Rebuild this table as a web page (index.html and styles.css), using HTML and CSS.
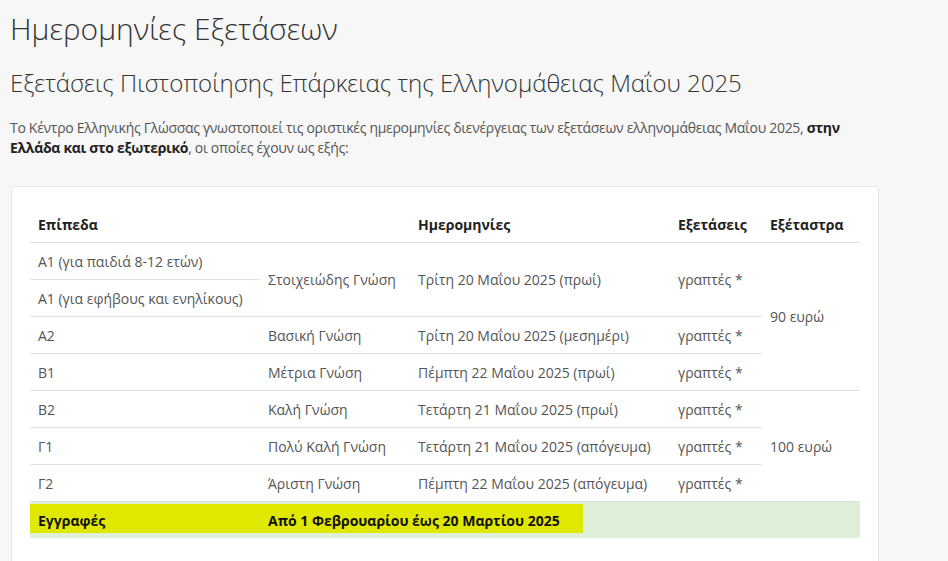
FILE: index.html
```html
<!DOCTYPE html>
<html lang="el">

<head>
  <meta charset="UTF-8" />
  <meta name="viewport" content="width=device-width, initial-scale=1" />
  <title>Ημερομηνίες Εξετάσεων</title>
  <link rel="stylesheet" href="styles.css">
</head>

<body>

  <h1 class="page-title">Ημερομηνίες Εξετάσεων</h1>
  <h2 class="sub-title">Εξετάσεις Πιστοποίησης Επάρκειας της Ελληνομάθειας Μαΐου 2025</h2>

  <p class="intro">Το Κέντρο Ελληνικής Γλώσσας γνωστοποιεί τις οριστικές ημερομηνίες διενέργειας των εξετάσεων ελληνομάθειας Μαΐου 2025, <strong>στην Ελλάδα και στο εξωτερικό</strong>, οι οποίες έχουν ως εξής:</p>

  <div class="card">
    <table class="exam-table">
      <thead>
        <tr>
          <th class="col-level">Επίπεδα</th>
          <th class="col-name"></th>
          <th class="col-date">Ημερομηνίες</th>
          <th class="col-type">Εξετάσεις</th>
          <th class="col-fee">Εξέταστρα</th>
        </tr>
      </thead>
      <tbody>
        <tr>
          <td>Α1 (για παιδιά 8-12 ετών)</td>
          <td rowspan="2">Στοιχειώδης Γνώση</td>
          <td rowspan="2">Τρίτη 20 Μαΐου 2025 (πρωί)</td>
          <td rowspan="2">γραπτές *</td>
          <td rowspan="4">90 ευρώ</td>
        </tr>
        <tr>
          <td>Α1 (για εφήβους και ενηλίκους)</td>
        </tr>
        <tr>
          <td>Α2</td>
          <td>Βασική Γνώση</td>
          <td>Τρίτη 20 Μαΐου 2025 (μεσημέρι)</td>
          <td>γραπτές *</td>
        </tr>
        <tr>
          <td>Β1</td>
          <td>Μέτρια Γνώση</td>
          <td>Πέμπτη 22 Μαΐου 2025 (πρωί)</td>
          <td>γραπτές *</td>
        </tr>
        <tr>
          <td>Β2</td>
          <td>Καλή Γνώση</td>
          <td>Τετάρτη 21 Μαΐου 2025 (πρωί)</td>
          <td>γραπτές *</td>
          <td rowspan="3">100 ευρώ</td>
        </tr>
        <tr>
          <td>Γ1</td>
          <td>Πολύ Καλή Γνώση</td>
          <td>Τετάρτη 21 Μαΐου 2025 (απόγευμα)</td>
          <td>γραπτές *</td>
        </tr>
        <tr>
          <td>Γ2</td>
          <td>Άριστη Γνώση</td>
          <td>Πέμπτη 22 Μαΐου 2025 (απόγευμα)</td>
          <td>γραπτές *</td>
        </tr>
        <tr class="reg-row">
          <td class="reg-label">Εγγραφές</td>
          <td class="reg-dates" colspan="4">Από 1 Φεβρουαρίου έως 20 Μαρτίου 2025</td>
        </tr>
      </tbody>
    </table>
  </div>

</body>

</html>
```

FILE: styles.css
```css
body {
  font-family: "Open Sans", "Noto Sans", sans-serif;
  margin: 0;
  background-color: #f7f7f7;
  padding: 0 10px 40px;
  color: #555;
}

.page-title {
  font-size: 30px;
  font-weight: 300;
  color: #333;
  margin: 10px 0 0;
  line-height: 38px;
}

.sub-title {
  font-size: 24px;
  font-weight: 300;
  color: #333;
  margin: 19px 0 0;
  line-height: 32px;
}

.intro {
  font-size: 14px;
  line-height: 20px;
  margin: 19px 0 0;
  max-width: 870px;
  color: #555;
  letter-spacing: -0.3px;
}

.intro strong {
  color: #222;
  font-weight: 700;
}

.card {
  background-color: white;
  margin: 28px 0 0 1px;
  width: 830px;
  padding: 19px 18px 60px;
  border: 1px solid #e6e6e6;
  border-radius: 4px;
}

.exam-table {
  width: 830px;
  border-collapse: collapse;
  font-size: 14px;
}

.exam-table th,
.exam-table td {
  text-align: left;
  padding: 0 8px;
  height: 36px;
  vertical-align: middle;
  border-top: 1px solid #e2e2e2;
}

.exam-table th {
  border-top: none;
  border-bottom: 1px solid #e2e2e2;
  color: #222;
  font-weight: 700;
}

.col-level { width: 214px; }
.col-name { width: 134px; }
.col-date { width: 244px; }
.col-type { width: 76px; }

.exam-table td {
  color: #555;
}

.reg-row td {
  background-color: #dff0d8;
  color: #111;
  font-weight: 700;
}

.reg-row .reg-label {
  background-image: linear-gradient(#e1e800, #e1e800);
  background-size: 100% 29px;
  background-position: 0 2px;
  background-repeat: no-repeat;
}

.reg-row .reg-dates {
  background-image: linear-gradient(#e1e800, #e1e800);
  background-size: 323px 29px;
  background-position: 0 2px;
  background-repeat: no-repeat;
}
```
